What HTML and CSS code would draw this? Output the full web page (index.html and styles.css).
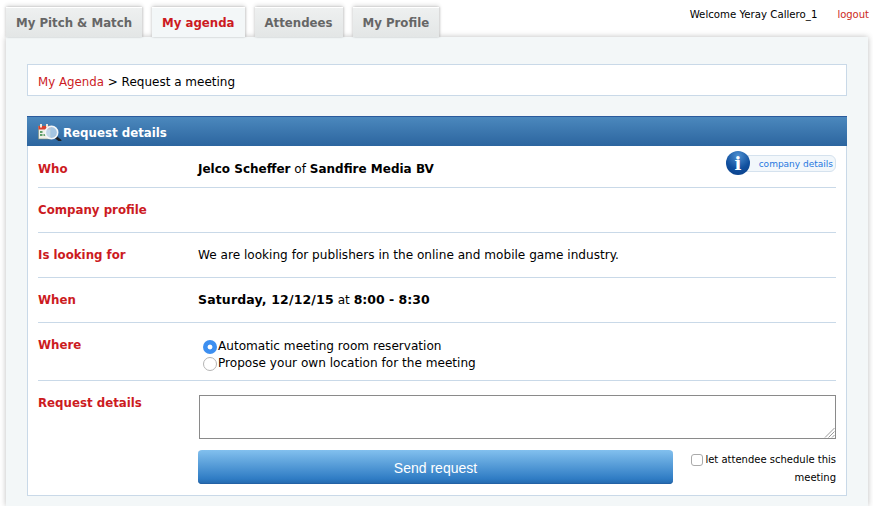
FILE: index.html
```html
<!DOCTYPE html>
<html lang="en">
<head>
<meta charset="utf-8">
<title>Request a meeting</title>
<link rel="stylesheet" href="styles.css">
</head>
<body>
<header class="top">
  <nav class="tabs">
    <a class="tab">My Pitch &amp; Match</a>
    <a class="tab tab-active">My agenda</a>
    <a class="tab">Attendees</a>
    <a class="tab">My Profile</a>
  </nav>
  <div class="user"><span>Welcome Yeray Callero_1</span><a class="logout">logout</a></div>
</header>
<main class="panel">
  <div class="crumb"><a class="red">My Agenda</a> &gt; Request a meeting</div>
  <section class="card">
    <h2 class="card-head">
      <svg class="head-icon" width="26" height="20" viewBox="0 0 26 20">
        <rect x="1.500" y="5" width="12" height="13" fill="#eef0e8" stroke="#7f9078" stroke-width=".6"/>
        <rect x="1.500" y="5" width="12" height="3.500" fill="#d8412f"/>
        <rect x="3" y="3" width="2" height="3.500" fill="#f3e6d8"/>
        <rect x="9" y="3" width="2" height="3.500" fill="#f3e6d8"/>
        <path d="M3 10h2.500v2H3zM3 13h2.500v2H3zM6.500 13h2v2h-2z" fill="#5f9f6a"/>
        <path d="M18.500 16l4.500 3.500" stroke="#1f2226" stroke-width="2.800" stroke-linecap="round"/>
        <circle cx="14.500" cy="11.500" r="6.200" fill="#b9d4ea" fill-opacity=".85" stroke="#f4f6f7" stroke-width="1.600"/>
      </svg>
      Request details
    </h2>
    <div class="rows">
      <div class="row row-who">
        <div class="label">Who</div>
        <div class="value"><b>Jelco Scheffer</b> of <b>Sandfire Media BV</b></div>
        <a class="details">
          <svg class="info" width="24" height="24" viewBox="0 0 24 24">
            <defs><radialGradient id="ball" cx=".5" cy=".2" r=".9"><stop offset="0" stop-color="#4d8fd0"/><stop offset=".6" stop-color="#104f9e"/><stop offset="1" stop-color="#0a3f88"/></radialGradient></defs>
            <circle cx="12" cy="12" r="12" fill="url(#ball)"/>
            <text x="12" y="19" text-anchor="middle" class="info-i">i</text>
          </svg>
          <span class="details-pill">company details</span>
        </a>
      </div>
      <div class="row">
        <div class="label">Company profile</div>
      </div>
      <div class="row">
        <div class="label">Is looking for</div>
        <div class="value">We are looking for publishers in the online and mobile game industry.</div>
      </div>
      <div class="row">
        <div class="label">When</div>
        <div class="value when"><b class="date">Saturday, 12/12/15</b> at <b>8:00 - 8:30</b></div>
      </div>
      <div class="row row-where">
        <div class="label">Where</div>
        <div class="options">
          <label class="option"><span class="radio radio-on"></span>Automatic meeting room reservation</label>
          <label class="option"><span class="radio"></span>Propose your own location for the meeting</label>
        </div>
      </div>
      <div class="row row-request">
        <div class="label">Request details</div>
        <div class="request">
          <div class="textarea">
            <svg class="grip" width="11" height="11" viewBox="0 0 11 11"><path d="M10.500 1L1 10.500M10.500 4.500L4.500 10.500M10.500 8L8 10.500" stroke="#9a9a9a" fill="none"/></svg>
          </div>
          <div class="actions">
            <button class="send" type="button">Send request</button>
            <div class="schedule"><span class="check"></span>let attendee schedule this meeting</div>
          </div>
        </div>
      </div>
    </div>
  </section>
</main>
</body>
</html>
```
FILE: styles.css
```css
* { box-sizing: border-box; }
html, body { margin: 0; padding: 0; }
body {
  width: 873px;
  height: 506px;
  overflow: hidden;
  background: #fff;
  font-family: "DejaVu Sans", Verdana, sans-serif;
  font-size: 12.100px;
  color: #000;
}
b { font-size: 12px; }
.when { margin-top: -1px; }
.when b { font-size: 12.500px; }
.when .date { letter-spacing: .15px; }
.top {
  height: 37px;
  display: flex;
  justify-content: space-between;
  padding-left: 6px;
}
.tabs { display: flex; gap: 10px; padding-top: 7px; }
.tab {
  height: 30px;
  padding: 0 10px;
  line-height: 30px;
  font-weight: bold;
  font-size: 11.750px;
  color: #666;
  background: linear-gradient(#eef0f0, #e3e6e6);
  border-top: 1px solid #fff;
  box-shadow: 0 -2px 4px rgba(0,0,0,.12), 1px 0 2px rgba(0,0,0,.15), -1px 0 2px rgba(0,0,0,.08);
}
.tab-active {
  color: #cc1b1f;
  background: #f3f7f8;
  position: relative;
  z-index: 2;
}
.user {
  display: flex;
  gap: 20px;
  padding: 8px 4px 0 0;
  font-size: 10.200px;
  line-height: 14px;
}
.logout { color: #cc2a20; font-size: 10px; }
.panel {
  width: 862px;
  height: 469px;
  margin-left: 6px;
  padding: 27px 21px 0 21px;
  background: #f3f7f8;
  box-shadow: 0 0 6px rgba(0,0,0,.26);
}
.crumb {
  height: 32px;
  padding-left: 10px;
  line-height: 34px;
  font-size: 12px;
  background: #fff;
  border: 1px solid #c9d9e8;
}
.red { color: #cc1b1f; font-size: 11.800px; }
.card { margin-top: 20px; }
.card-head {
  height: 30px;
  margin: 0;
  display: flex;
  align-items: center;
  padding: 2px 0 0 10px;
  font-size: 11.800px;
  font-weight: bold;
  color: #fff;
  background: linear-gradient(#4b88bd, #2c659f);
  border-top: 1px solid #2a5a9c;
}
.head-icon { margin-top: -3px; }
.rows {
  height: 350px;
  padding: 0 10px;
  background: #fff;
  border: 1px solid #c9d9e8;
  border-top: 0;
}
.row {
  display: flex;
  height: 45px;
  padding-top: 14px;
  line-height: 17px;
  border-bottom: 1px solid #c9d9e8;
  position: relative;
}
.row-who { height: 42px; padding-top: 15px; }
.row-where { height: 58px; padding-top: 14px; }
.row-request { height: auto; border-bottom: 0; padding-top: 14px; }
.label {
  width: 160px;
  flex: none;
  font-size: 11.800px;
  font-weight: bold;
  color: #cc1b1f;
}
.details {
  position: absolute;
  right: 0;
  top: 5px;
  display: flex;
  align-items: center;
  color: #2678e0;
  font-size: 9px;
}
.info { position: relative; z-index: 1; }
.info-i { font: bold 18px "DejaVu Serif", serif; fill: #fff; }
.details-pill {
  height: 17px;
  margin-left: -10px;
  padding: 0 2px 0 18px;
  line-height: 17px;
  background: #f2f7fb;
  border: 1px solid #d5e2ee;
  border-radius: 0 6px 6px 0;
}
.options { padding: 1px 0 0 5px; }
.option { display: flex; align-items: center; height: 17px; }
.radio {
  width: 14px;
  height: 14px;
  margin-right: 1px;
  background: #fff;
  border: 1px solid #b5b5b5;
  border-radius: 50%;
}
.radio-on {
  border: 0;
  background: radial-gradient(circle, #fff 0 2px, #3d8ff0 2.800px);
}
.request { width: 637px; margin-left: 1px; flex: none; }
.textarea {
  height: 44px;
  position: relative;
  border: 1px solid #8a8a8a;
}
.grip { position: absolute; right: 0; bottom: 0; }
.actions { display: flex; justify-content: space-between; margin-top: 11px; }
.send {
  width: 475px;
  height: 34px;
  margin-left: -1px;
  padding: 2px 0 0;
  border: 0;
  border-radius: 4px;
  color: #fff;
  font-family: "Liberation Sans", Arial, sans-serif;
  font-size: 14px;
  background: linear-gradient(#82c0ee, #2f7cc4 85%, #2468ad);
  box-shadow: inset 0 -1px 0 #2462a5;
}
.schedule {
  position: relative;
  width: 146px;
  padding-top: 1px;
  font-size: 10px;
  line-height: 18px;
  text-align: right;
}
.check {
  position: absolute;
  left: 1px;
  top: 4px;
  width: 12px;
  height: 12px;
  background: #fff;
  border: 1px solid #aaa;
  border-radius: 3px;
}
```
